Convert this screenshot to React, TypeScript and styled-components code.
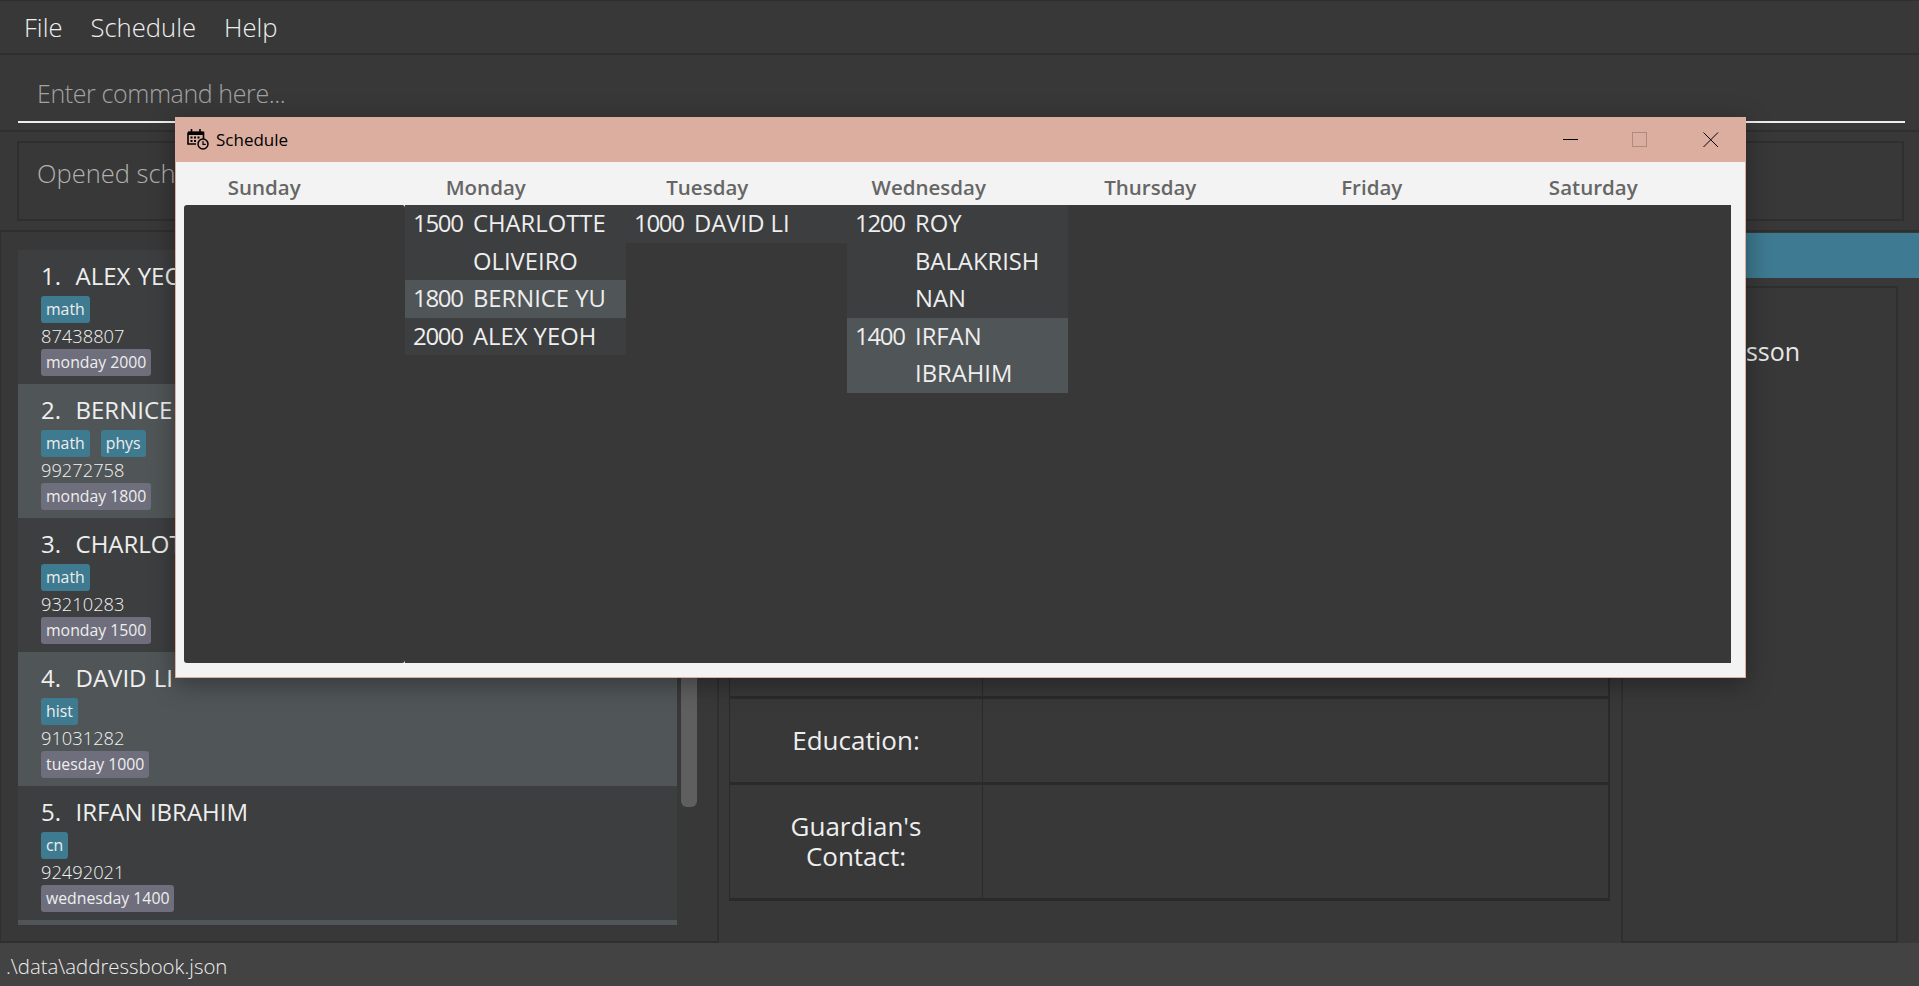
import styled, { createGlobalStyle } from 'styled-components'

const UI_FONT = '"Open Sans", "Noto Sans", "Liberation Sans", sans-serif'
const TITLE_BAR = '#dbaea0'

const GlobalStyle = createGlobalStyle`
  html, body {
    margin: 0;
    padding: 0;
    background: #383838;
    font-family: ${UI_FONT};
  }
  * {
    box-sizing: border-box;
  }
`

interface Person {
  index: number
  name: string
  tags: string[]
  phone: string
  lesson: string
}

const people: Person[] = [
  { index: 1, name: 'ALEX YEOH', tags: ['math'], phone: '87438807', lesson: 'monday 2000' },
  { index: 2, name: 'BERNICE YU', tags: ['math', 'phys'], phone: '99272758', lesson: 'monday 1800' },
  { index: 3, name: 'CHARLOTTE OLIVEIRO', tags: ['math'], phone: '93210283', lesson: 'monday 1500' },
  { index: 4, name: 'DAVID LI', tags: ['hist'], phone: '91031282', lesson: 'tuesday 1000' },
  { index: 5, name: 'IRFAN IBRAHIM', tags: ['cn'], phone: '92492021', lesson: 'wednesday 1400' },
]

interface Slot {
  time: string
  lines: string[]
}

const week: { day: string; slots: Slot[] }[] = [
  { day: 'Sunday', slots: [] },
  {
    day: 'Monday',
    slots: [
      { time: '1500', lines: ['CHARLOTTE', 'OLIVEIRO'] },
      { time: '1800', lines: ['BERNICE YU'] },
      { time: '2000', lines: ['ALEX YEOH'] },
    ],
  },
  { day: 'Tuesday', slots: [{ time: '1000', lines: ['DAVID LI'] }] },
  {
    day: 'Wednesday',
    slots: [
      { time: '1200', lines: ['ROY', 'BALAKRISH', 'NAN'] },
      { time: '1400', lines: ['IRFAN', 'IBRAHIM'] },
    ],
  },
  { day: 'Thursday', slots: [] },
  { day: 'Friday', slots: [] },
  { day: 'Saturday', slots: [] },
]

function CalendarClockIcon() {
  return (
    <svg width="22" height="22" viewBox="0 0 22 22" fill="none">
      <path d="M1 4.5h15.5v6.5M1 4.5V16h8" stroke="#000" strokeWidth="1.6" />
      <path d="M1 3.5h15.5V7H1z" fill="#000" />
      <path d="M4.5 1v3.5M13 1v3.5" stroke="#000" strokeWidth="1.6" />
      <path d="M3.5 8.5h2v2h-2zM7 8.5h2v2H7zM10.5 8.5h2v2h-2zM3.5 12h2v2h-2zM7 12h2v2H7z" fill="#000" />
      <circle cx="16" cy="16" r="5" fill={TITLE_BAR} stroke="#000" strokeWidth="1.5" />
      <path d="M16 13v3.3h2.8" stroke="#000" strokeWidth="1.2" />
    </svg>
  )
}

export default function App() {
  return (
    <>
      <GlobalStyle />
      <Page>
        <MenuBar>
          <MenuItem>File</MenuItem>
          <MenuItem>Schedule</MenuItem>
          <MenuItem>Help</MenuItem>
        </MenuBar>

        <CommandPane>
          <CommandInput>Enter command here...</CommandInput>
        </CommandPane>

        <ResultPane>
          <ResultBox>Opened schedule</ResultBox>
        </ResultPane>

        <MainArea>
          <ListPane>
            <PersonList>
              {people.map((person) => (
                <PersonCard key={person.index} $alt={person.index % 2 === 0}>
                  <PersonName>
                    {person.index}.&nbsp;&nbsp;{person.name}
                  </PersonName>
                  <TagRow>
                    {person.tags.map((tag) => (
                      <Tag key={tag}>{tag}</Tag>
                    ))}
                  </TagRow>
                  <Phone>{person.phone}</Phone>
                  <LessonRow>
                    <Tag $lesson>{person.lesson}</Tag>
                  </LessonRow>
                </PersonCard>
              ))}
              <CardSliver />
            </PersonList>
            <ScrollThumb />
          </ListPane>

          <DetailPane>
            <DetailHeader />
            <DetailBody>
              <TablePane>
                <DetailTable>
                  <DetailRow $height={86}>
                    <DetailLabel />
                    <DetailValue />
                  </DetailRow>
                  <DetailRow $height={86}>
                    <DetailLabel>Education:</DetailLabel>
                    <DetailValue />
                  </DetailRow>
                  <DetailRow $height={116}>
                    <DetailLabel>
                      Guardian's
                      <br />
                      Contact:
                    </DetailLabel>
                    <DetailValue />
                  </DetailRow>
                </DetailTable>
              </TablePane>
              <SidePane>
                <SideTitle>Lesson</SideTitle>
              </SidePane>
            </DetailBody>
          </DetailPane>
        </MainArea>

        <StatusBar>.\data\addressbook.json</StatusBar>

        <ScheduleWindow>
          <TitleBar>
            <TitleGroup>
              <CalendarClockIcon />
              <TitleText>Schedule</TitleText>
            </TitleGroup>
            <WindowButtons>
              <MinimizeGlyph width="16" height="16" viewBox="0 0 16 16">
                <path d="M0 7.5h15" stroke="#000" strokeWidth="1" />
              </MinimizeGlyph>
              <svg width="16" height="16" viewBox="0 0 16 16">
                <rect x="0.5" y="0.5" width="14" height="14" fill="none" stroke="#af8a7e" />
              </svg>
              <svg width="16" height="16" viewBox="0 0 16 16">
                <path d="M0.5 0.5l14.5 14.5M15 0.5L0.5 15" stroke="#000" strokeWidth="1" />
              </svg>
            </WindowButtons>
          </TitleBar>

          <WindowBody>
            <DayHeaders>
              {week.map(({ day }) => (
                <DayHeader key={day}>{day}</DayHeader>
              ))}
            </DayHeaders>
            <WeekGrid>
              {week.map(({ day, slots }, dayIndex) => (
                <DayColumn key={day} $rounded={dayIndex === 0}>
                  {slots.map((slot, slotIndex) => (
                    <SlotRow key={slot.time} $alt={slotIndex % 2 === 1}>
                      <SlotTime>{slot.time}</SlotTime>
                      <SlotName>
                        {slot.lines.map((line) => (
                          <SlotLine key={line}>{line}</SlotLine>
                        ))}
                      </SlotName>
                    </SlotRow>
                  ))}
                </DayColumn>
              ))}
            </WeekGrid>
          </WindowBody>
        </ScheduleWindow>
      </Page>
    </>
  )
}

const Page = styled.div`
  position: relative;
  display: flex;
  flex-direction: column;
  width: 1919px;
  height: 986px;
  overflow: hidden;
  background: #383838;
  color: #eeeeee;
`

const MenuBar = styled.div`
  display: flex;
  align-items: center;
  gap: 28px;
  height: 55px;
  flex: none;
  padding: 0 0 0 24px;
  border-top: 1px solid #2e2e2e;
  border-bottom: 2px solid #2f2f2f;
`

const MenuItem = styled.span`
  font-size: 25.6px;
  font-weight: 300;
  color: #efefef;
`

const CommandPane = styled.div`
  height: 77px;
  flex: none;
  padding: 0 14px 7px 18px;
  border-bottom: 2px solid #2f2f2f;
  display: flex;
  align-items: flex-end;
`

const CommandInput = styled.div`
  flex: 1;
  height: 56px;
  padding: 0 0 0 19px;
  line-height: 52px;
  font-size: 25px;
  font-weight: 300;
  letter-spacing: -0.4px;
  color: #a3a3a3;
  border-bottom: 2px solid #eeeeee;
`

const ResultPane = styled.div`
  height: 100px;
  flex: none;
  margin-bottom: 1px;
  padding: 9px 15px 9px 17px;
  border-bottom: 2px solid #2f2f2f;
`

const ResultBox = styled.div`
  height: 100%;
  padding: 10px 18px;
  font-size: 25.5px;
  font-weight: 300;
  line-height: 40px;
  color: #b0b0b0;
  border: 2px solid #2f2f2f;
`

const MainArea = styled.div`
  flex: 1;
  display: flex;
  min-height: 0;
`

const ListPane = styled.div`
  position: relative;
  width: 719px;
  padding: 17px 0 0 17px;
  border-right: 2px solid #2f2f2f;
  border-bottom: 2px solid #2f2f2f;
  border-left: 1px solid #2f2f2f;
`

const PersonList = styled.div`
  width: 659px;
  display: flex;
  flex-direction: column;
`

const PersonCard = styled.div<{ $alt: boolean }>`
  height: 134px;
  padding: 10px 0 0 23px;
  background: ${({ $alt }) => ($alt ? '#505557' : '#3c3e3f')};
`

const PersonName = styled.div`
  height: 32px;
  line-height: 32px;
  font-size: 24px;
  font-weight: 500;
  word-spacing: 1px;
  white-space: nowrap;
  color: #eeeeee;
`

const TagRow = styled.div`
  display: flex;
  gap: 11px;
  margin-top: 4px;
`

const LessonRow = styled.div`
  display: flex;
`

const Tag = styled.span<{ $lesson?: boolean }>`
  height: 27px;
  padding: 0 5px;
  line-height: 27px;
  font-size: 15.8px;
  font-weight: 500;
  border-radius: 3px;
  color: #eeeeee;
  background: ${({ $lesson }) => ($lesson ? '#6e6e7c' : '#3e7b91')};
`

const Phone = styled.div`
  height: 26px;
  line-height: 26px;
  font-size: 18.3px;
  font-weight: 300;
  color: #f2f2f2;
`

const CardSliver = styled.div`
  height: 5px;
  background: #505557;
`

const ScrollThumb = styled.div`
  position: absolute;
  top: 60px;
  left: 680px;
  width: 16px;
  height: 514px;
  border-radius: 6px;
  background: #5f5f5f;
`

const DetailPane = styled.div`
  flex: 1;
  display: flex;
  flex-direction: column;
`

const DetailHeader = styled.div`
  height: 45px;
  flex: none;
  background: #3e7a91;
`

const DetailBody = styled.div`
  flex: 1;
  display: flex;
  min-height: 0;
`

const TablePane = styled.div`
  width: 903px;
  display: flex;
  flex-direction: column;
  justify-content: flex-end;
  padding: 0 11px 42px 10px;
  border-right: 1px solid #2f2f2f;
`

const DetailTable = styled.div`
  display: flex;
  flex-direction: column;
  border-left: 1px solid #2a2a2a;
  border-right: 2px solid #2a2a2a;
`

const DetailRow = styled.div<{ $height: number }>`
  display: grid;
  grid-template-columns: 253px 1fr;
  height: ${({ $height }) => $height}px;
  border-bottom: 3px solid #2a2a2a;
`

const DetailLabel = styled.div`
  display: flex;
  align-items: center;
  justify-content: center;
  text-align: center;
  padding-bottom: 2px;
  font-size: 26px;
  font-weight: 500;
  line-height: 30px;
  color: #eeeeee;
  border-right: 1px solid #2a2a2a;
`

const DetailValue = styled.div``

const SidePane = styled.div`
  width: 276px;
  margin: 8px 0 0 0;
  padding-top: 46px;
  text-align: center;
  font-size: 25px;
  font-weight: 500;
  color: #e8e8e8;
  border-left: 1px solid #2f2f2f;
  border-right: 2px solid #2f2f2f;
  border-top: 2px solid #2f2f2f;
  border-bottom: 2px solid #2f2f2f;
`

const SideTitle = styled.div`
  line-height: 34px;
`

const StatusBar = styled.div`
  height: 43px;
  flex: none;
  padding-left: 6px;
  line-height: 46px;
  font-size: 20.4px;
  font-weight: 300;
  color: #eeeeee;
  background: #434343;
`

const ScheduleWindow = styled.div`
  position: absolute;
  top: 117px;
  left: 175px;
  width: 1571px;
  height: 561px;
  display: flex;
  flex-direction: column;
  background: #f3f3f3;
  border: 1px solid ${TITLE_BAR};
  box-shadow: 0 6px 24px rgba(0, 0, 0, 0.35);
`

const TitleBar = styled.div`
  height: 44px;
  flex: none;
  display: flex;
  align-items: center;
  justify-content: space-between;
  background: ${TITLE_BAR};
`

const TitleGroup = styled.div`
  display: flex;
  align-items: center;
  gap: 7px;
  padding: 0 0 2px 11px;
`

const TitleText = styled.span`
  font-size: 17px;
  color: #000000;
`

const WindowButtons = styled.div`
  display: flex;
  align-items: center;
  gap: 55px;
  padding: 0 26px 1px 0;
`

const MinimizeGlyph = styled.svg`
  margin-right: -2px;
`

const WindowBody = styled.div`
  flex: 1;
  display: flex;
  flex-direction: column;
  padding: 0 14px 14px 8px;
`

const DayHeaders = styled.div`
  display: grid;
  grid-template-columns: repeat(7, 221.5px);
  height: 43px;
  flex: none;
`

const DayHeader = styled.div`
  padding: 2px 61px 0 0;
  line-height: 46px;
  text-align: center;
  font-size: 20.5px;
  font-weight: 600;
  color: #666666;
`

const WeekGrid = styled.div`
  flex: 1;
  display: grid;
  grid-template-columns: 221px 221px 221px 221px 221px 221px 1fr;
  background: #f3f3f3;
`

const DayColumn = styled.div<{ $rounded: boolean }>`
  background: #383838;
  border-radius: ${({ $rounded }) => ($rounded ? '3px' : '0')};
`

const SlotRow = styled.div<{ $alt: boolean }>`
  display: grid;
  grid-template-columns: 68px 1fr;
  background: ${({ $alt }) => ($alt ? '#505557' : '#3c3e3f')};
`

const SlotTime = styled.div`
  padding-left: 8px;
  line-height: 36px;
  font-size: 24px;
  font-weight: 500;
  letter-spacing: -1.3px;
  color: #eeeeee;
`

const SlotName = styled.div`
  display: flex;
  flex-direction: column;
`

const SlotLine = styled.span`
  height: 37.5px;
  line-height: 36px;
  font-size: 23.8px;
  font-weight: 500;
  color: #eeeeee;
`
